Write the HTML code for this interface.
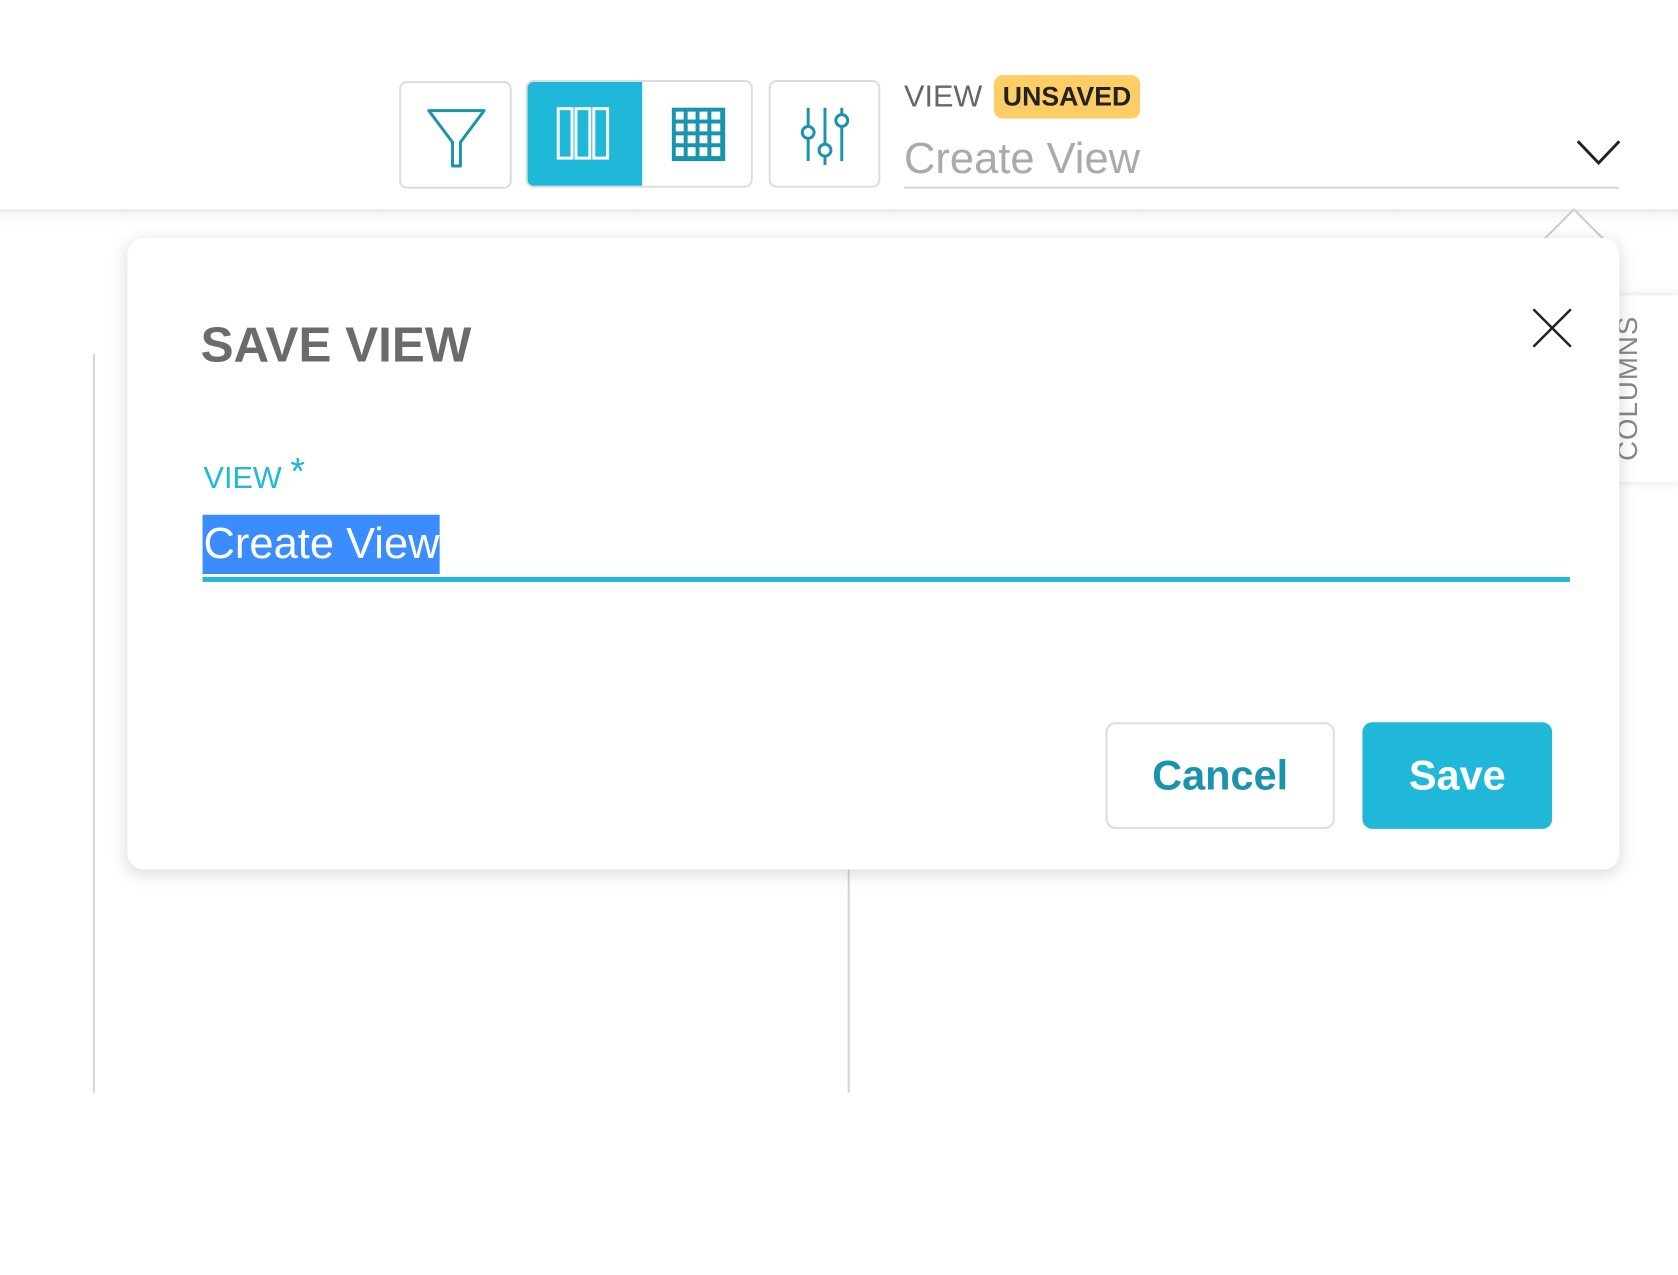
<!DOCTYPE html>
<html><head><meta charset="utf-8"><style>
*{box-sizing:border-box;margin:0;padding:0}
body{width:1678px;height:1273px;background:#fff;position:relative;overflow:hidden;font-family:"Liberation Sans",sans-serif}
#w{position:absolute;left:0;top:0;width:1700px;height:1290px;transform:scale(0.988);transform-origin:0 0}
.abs{position:absolute}
.btn{position:absolute;border:2px solid #ddd;border-radius:8px;background:#fff}
</style></head><body><div id="w">
<div class="btn" style="left:404px;top:82px;width:114px;height:109px">
<svg width="110" height="105" viewBox="0 0 110 105"><path d="M28 28 H84 L60 60 V84 H52 V60 Z" fill="none" stroke="#1a93ad" stroke-width="3" stroke-linejoin="round"/></svg>
</div>
<div class="btn" style="left:532px;top:81px;width:230px;height:109px;overflow:hidden">
<div class="abs" style="left:-2px;top:-2px;width:118px;height:109px;background:#20b8d8"></div>
<svg class="abs" style="left:-2px;top:-2px" width="118" height="109" viewBox="0 0 118 109"><g fill="none" stroke="#fff" stroke-width="3"><rect x="33" y="29" width="14" height="50"/><rect x="51" y="29" width="14" height="50"/><rect x="69" y="29" width="14" height="50"/></g></svg>
<svg class="abs" style="left:116px;top:-2px" width="114" height="109" viewBox="0 0 114 109"><g fill="#1a93ad"><rect x="30" y="28" width="54" height="54"/></g><g fill="#fff"><rect x="34" y="32" width="8" height="8"/><rect x="46" y="32" width="8" height="8"/><rect x="58" y="32" width="8" height="8"/><rect x="70" y="32" width="9" height="8"/><rect x="34" y="44" width="8" height="8"/><rect x="46" y="44" width="8" height="8"/><rect x="58" y="44" width="8" height="8"/><rect x="70" y="44" width="9" height="8"/><rect x="34" y="56" width="8" height="8"/><rect x="46" y="56" width="8" height="8"/><rect x="58" y="56" width="8" height="8"/><rect x="70" y="56" width="9" height="8"/><rect x="34" y="68" width="8" height="9"/><rect x="46" y="68" width="8" height="9"/><rect x="58" y="68" width="8" height="9"/><rect x="70" y="68" width="9" height="9"/></g></svg>
</div>
<div class="btn" style="left:778px;top:81px;width:113px;height:109px">
<svg width="109" height="105" viewBox="0 0 109 105"><g fill="none" stroke="#1a93ad" stroke-width="3"><path d="M38 26 V45 M38 57 V80 M55 26 V63 M55 75 V84 M72 26 V33 M72 45 V80"/><circle cx="38" cy="51" r="6"/><circle cx="55" cy="69" r="6"/><circle cx="72" cy="39" r="6"/></g></svg>
</div>
<div class="abs" style="left:915px;top:80px;font-size:31px;color:#666">VIEW</div>
<div class="abs" style="left:1006px;top:76px;width:148px;height:44px;background:#ffcd66;border-radius:9px;font-size:27px;font-weight:bold;color:#222;text-align:center;line-height:44px">UNSAVED</div>
<div class="abs" style="left:915px;top:136px;font-size:44px;color:#aaa">Create View</div>
<div class="abs" style="left:915px;top:189px;width:724px;height:2px;background:#d6d6d6"></div>
<svg class="abs" style="left:1594px;top:140px" width="48" height="30"><path d="M3 3 L24 25 L45 3" fill="none" stroke="#222" stroke-width="3"/></svg>
<div class="abs" style="left:0;top:212px;width:1700px;height:2px;background:#e6e6e6"></div>
<div class="abs" style="left:0;top:214px;width:1700px;height:14px;background:linear-gradient(#f4f4f4,#fff)"></div>
<div class="abs" style="left:1630px;top:299px;width:70px;height:189px;background:#fff;box-shadow:0 0 10px rgba(0,0,0,.12)"></div>
<div class="abs" style="left:1563px;top:375px;width:170px;height:36px;transform:rotate(-90deg);font-size:28px;color:#888;text-align:center;line-height:36px;letter-spacing:1px">COLUMNS</div>
<div class="abs" style="left:94px;top:358px;width:2px;height:748px;background:#d4d4d4"></div>
<div class="abs" style="left:858px;top:860px;width:2px;height:246px;background:#d4d4d4"></div>
<svg class="abs" style="left:1560px;top:209px" width="68" height="36"><path d="M2 34 L33 3 L64 34" fill="#fff" stroke="#ccc" stroke-width="2"/></svg>
<div class="abs" style="left:129px;top:241px;width:1510px;height:639px;background:#fff;border-radius:16px;box-shadow:0 4px 18px rgba(0,0,0,.16)"></div>
<div class="abs" style="left:203px;top:320px;font-size:50px;font-weight:bold;color:#6b6b6b">SAVE VIEW</div>
<svg class="abs" style="left:1550px;top:311px" width="42" height="42"><path d="M2 2 L40 40 M40 2 L2 40" stroke="#222" stroke-width="2.5"/></svg>
<div class="abs" style="left:206px;top:461px;font-size:31px;color:#1fb8d6">VIEW <span style="font-size:38px;position:relative;top:-4px">*</span></div>
<div class="abs" style="left:205px;top:521px;width:240px;height:60px;background:#3a8cff"></div>
<div class="abs" style="left:206px;top:524px;font-size:44px;color:#fff;line-height:54px">Create View</div>
<div class="abs" style="left:205px;top:584px;width:1384px;height:5px;background:#1fb8d6"></div>
<div class="abs" style="left:1119px;top:731px;width:232px;height:108px;border:2px solid #ddd;border-radius:10px;font-size:42px;font-weight:bold;color:#1a93ad;text-align:center;line-height:104px">Cancel</div>
<div class="abs" style="left:1379px;top:731px;width:192px;height:108px;background:#20b8d8;border-radius:10px;font-size:42px;font-weight:bold;color:#fff;text-align:center;line-height:108px">Save</div>
</div></body></html>
